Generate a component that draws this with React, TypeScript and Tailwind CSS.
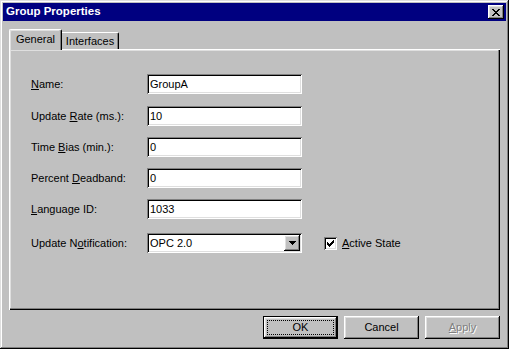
import React from "react";

const font = { fontFamily: '"Liberation Sans", Arial, sans-serif' };

function Field({ value }: { value: string }) {
  return (
    <div className="w-[155px] h-[20px] bg-white flex items-center pl-[3px] text-[11px] text-black shadow-[inset_1px_1px_#808080,inset_-1px_-1px_#ffffff,inset_2px_2px_#000000,inset_-2px_-2px_#dfdfdf]">
      {value}
    </div>
  );
}

function Row({ label, children, className }: { label: React.ReactNode; children: React.ReactNode; className?: string }) {
  return (
    <div className={"flex items-center h-[20px] " + (className || "")}>
      <div className="w-[116px] text-[11px] text-black">{label}</div>
      {children}
    </div>
  );
}

const X_ROWS = ["11000011", "01100110", "00111100", "00011000", "00111100", "01100110", "11000011"];
const CHECK_ROWS = ["0000001", "0000011", "1000111", "1101110", "1111100", "0111000", "0010000"];

function Pix({ rows, color = "#000" }: { rows: string[]; color?: string }) {
  const w = rows[0].length;
  const h = rows.length;
  return (
    <svg width={w} height={h} viewBox={`0 0 ${w} ${h}`} shapeRendering="crispEdges">
      {rows.flatMap((r, y) =>
        r.split("").map((c, x) => (c === "1" ? <rect key={`${x}-${y}`} x={x} y={y} width={1} height={1} fill={color} /> : null))
      )}
    </svg>
  );
}

const raised = "shadow-[inset_-1px_-1px_#000000,inset_1px_1px_#ffffff,inset_-2px_-2px_#808080,inset_2px_2px_#dfdfdf]";

export default function App() {
  return (
    <div
      style={font}
      className="w-[509px] h-[349px] bg-[#c0c0c0] p-[3px] flex flex-col shadow-[inset_-1px_-1px_#000000,inset_1px_1px_#dfdfdf,inset_-2px_-2px_#808080,inset_2px_2px_#ffffff]"
    >
      {/* Title bar */}
      <div className="h-[18px] bg-[#000080] flex items-center justify-between pl-[3px] pr-[2px]">
        <span className="text-white font-bold text-[11.5px] leading-none">Group Properties</span>
        <div className={"w-[16px] h-[14px] bg-[#c0c0c0] flex items-center justify-center " + raised}>
          <Pix rows={X_ROWS} />
        </div>
      </div>

      {/* Tabs */}
      <div className="mt-[8px] ml-[6px] flex items-end h-[20px]">
        <div className="relative z-10 w-[53px] h-[21px] -mb-[1px] bg-[#c0c0c0] border-l border-t border-white border-r border-r-black rounded-t-[2px] shadow-[inset_-1px_0_#808080,inset_1px_1px_#dfdfdf] flex items-center justify-center text-[11px] text-black pb-[2px]">
          General
        </div>
        <div className="w-[57px] h-[17px] bg-[#c0c0c0] border-t border-white border-r border-r-black rounded-tr-[2px] shadow-[inset_-1px_0_#808080] flex items-center justify-center text-[11px] text-black">
          Interfaces
        </div>
      </div>

      {/* Panel */}
      <div className="ml-[6px] w-[491px] h-[261px] bg-[#c0c0c0] pt-[25px] pl-[22px] shadow-[inset_1px_1px_#ffffff,inset_-1px_-1px_#000000,inset_-2px_-2px_#808080,inset_2px_2px_#dfdfdf]">
        <Row label={<><span className="underline">N</span>ame:</>}>
          <Field value="GroupA" />
        </Row>
        <Row className="mt-[12px]" label={<>Update <span className="underline">R</span>ate (ms.):</>}>
          <Field value="10" />
        </Row>
        <Row className="mt-[11px]" label={<>Time <span className="underline">B</span>ias (min.):</>}>
          <Field value="0" />
        </Row>
        <Row className="mt-[11px]" label={<>Percent <span className="underline">D</span>eadband:</>}>
          <Field value="0" />
        </Row>
        <Row className="mt-[11px]" label={<><span className="underline">L</span>anguage ID:</>}>
          <Field value="1033" />
        </Row>
        <Row className="mt-[14px]" label={<>Update N<span className="underline">o</span>tification:</>}>
          <div className="w-[155px] h-[20px] bg-white flex items-center justify-between pl-[3px] pr-[2px] text-[11px] text-black shadow-[inset_1px_1px_#808080,inset_-1px_-1px_#ffffff,inset_2px_2px_#000000,inset_-2px_-2px_#dfdfdf]">
            <span>OPC 2.0</span>
            <div className={"w-[16px] h-[16px] bg-[#c0c0c0] flex items-center justify-center " + raised}>
              <svg width="7" height="4" viewBox="0 0 7 4" shapeRendering="crispEdges">
                <rect x="0" y="0" width="7" height="1" fill="#000" />
                <rect x="1" y="1" width="5" height="1" fill="#000" />
                <rect x="2" y="2" width="3" height="1" fill="#000" />
                <rect x="3" y="3" width="1" height="1" fill="#000" />
              </svg>
            </div>
          </div>
          <div className="ml-[22px] flex items-center gap-[5px]">
            <div className="w-[13px] h-[13px] bg-white flex items-center justify-center shadow-[inset_1px_1px_#808080,inset_-1px_-1px_#ffffff,inset_2px_2px_#000000,inset_-2px_-2px_#dfdfdf]">
              <Pix rows={CHECK_ROWS} />
            </div>
            <span className="text-[11px] text-black">
              <span className="underline">A</span>ctive State
            </span>
          </div>
        </Row>
      </div>

      {/* Buttons */}
      <div className="mt-[6px] ml-[6px] w-[491px] flex justify-end gap-[6px]">
        <div className="relative w-[75px] h-[23px] border border-black bg-[#c0c0c0] flex items-center justify-center text-[11px] text-black shadow-[inset_-1px_-1px_#000000,inset_1px_1px_#ffffff,inset_-2px_-2px_#808080,inset_2px_2px_#dfdfdf]">
          OK
          <div className="absolute left-[3px] right-[3px] top-[3px] bottom-[3px] border border-dotted border-black" />
        </div>
        <div className={"w-[75px] h-[23px] bg-[#c0c0c0] flex items-center justify-center text-[11px] text-black " + raised}>
          Cancel
        </div>
        <div className={"w-[75px] h-[23px] bg-[#c0c0c0] flex items-center justify-center text-[11px] text-[#808080] [text-shadow:1px_1px_0_#ffffff] " + raised}>
          <span>
            <span className="underline">A</span>pply
          </span>
        </div>
      </div>
    </div>
  );
}
